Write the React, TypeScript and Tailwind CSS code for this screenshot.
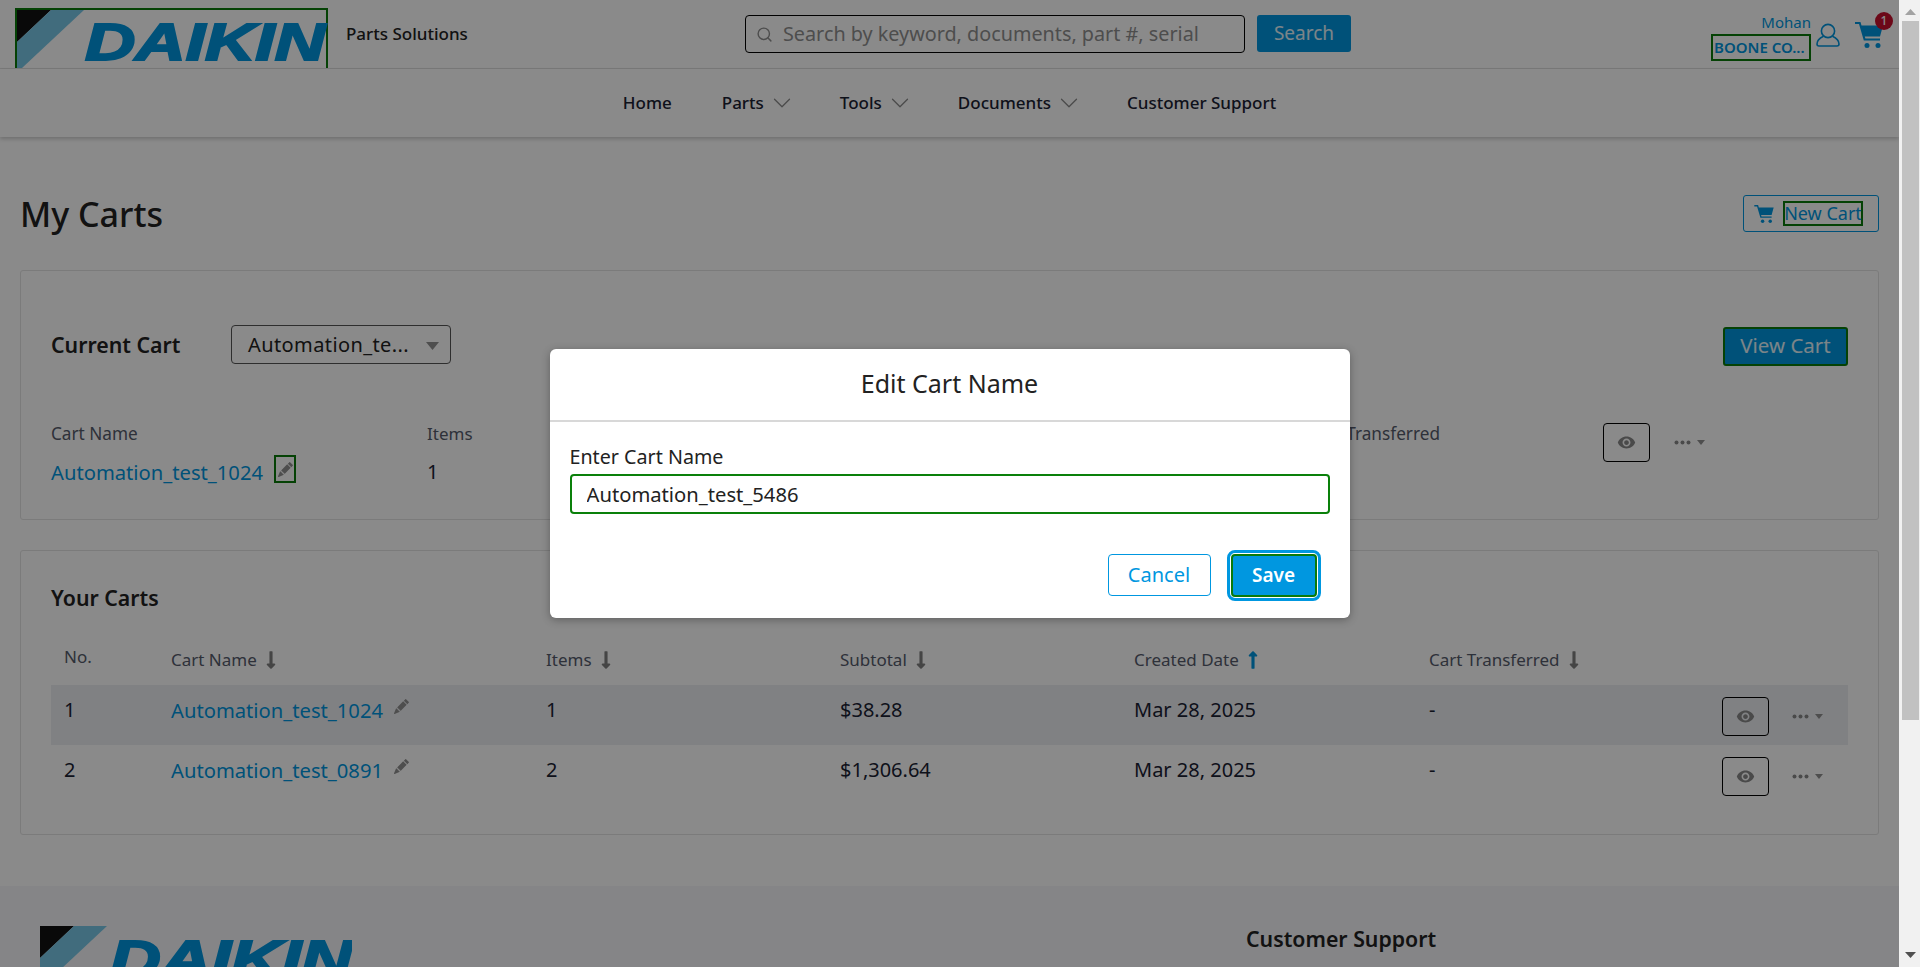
import { ChevronDown, Search } from "lucide-react";
import { BsPencilFill } from "react-icons/bs";
import { FaLongArrowAltDown, FaLongArrowAltUp } from "react-icons/fa";
import { MdRemoveRedEye } from "react-icons/md";

const carts = [
  { no: 1, name: "Automation_test_1024", items: 1, subtotal: "$38.28", date: "Mar 28, 2025" },
  { no: 2, name: "Automation_test_0891", items: 2, subtotal: "$1,306.64", date: "Mar 28, 2025" },
];

const Logo = ({ textX = 68, textY = 50, textWidth = 240 }: { textX?: number; textY?: number; textWidth?: number }) => (
  <svg width="312" height="70" viewBox="0 0 312 70" className="block">
    <polygon points="0,0 34,0 0,32" fill="#111" />
    <polygon points="34,0 67,0 5,58 0,62 0,32" fill="#78c8e8" />
    <text
      x={textX}
      y={textY}
      fontFamily="'Liberation Sans', sans-serif"
      fontWeight="700"
      fontStyle="italic"
      fontSize="52"
      textLength={textWidth}
      lengthAdjust="spacingAndGlyphs"
      fill="#0097e0"
      stroke="#0097e0"
      strokeWidth="2"
    >
      DAIKIN
    </text>
  </svg>
);

const UserIcon = () => (
  <svg width="24" height="24" viewBox="0 0 24 24" fill="none" stroke="#0097e0" strokeWidth="1.6">
    <circle cx="12" cy="8" r="6.6" />
    <path d="M7.5 13.2C3.5 15 1 18.5 1 21c0 1.4.8 2 2 2h18c1.2 0 2-.6 2-2 0-2.5-2.5-6-6.500-7.800" />
  </svg>
);

const CartIcon = ({ width, height }: { width: number; height: number }) => (
  <svg width={width} height={height} viewBox="0 0 28 26" fill="#0097e0">
    <path d="M0 0h5.500l1 3.500H28l-3 11H9.800l.6 2H25v2H8.800L4 2H0z" />
    <circle cx="12" cy="23.500" r="2.500" />
    <circle cx="23" cy="23.500" r="2.500" />
  </svg>
);

const MoreMenu = () => (
  <div className="flex items-center gap-[6px]">
    <svg width="17" height="5" viewBox="0 0 17 5" fill="#8a8a8a">
      <circle cx="2.500" cy="2.500" r="2" />
      <circle cx="8.500" cy="2.500" r="2" />
      <circle cx="14.500" cy="2.500" r="2" />
    </svg>
    <svg width="8" height="5" viewBox="0 0 8 5" fill="#909090">
      <polygon points="0,0 8,0 4,5" />
    </svg>
  </div>
);

const EyeButton = () => (
  <button className="flex h-[39px] w-[47px] items-center justify-center rounded-[4px] border border-black text-[#8a8a8a]">
    <MdRemoveRedEye size={19} />
  </button>
);

const NavItem = ({ label, menu }: { label: string; menu?: boolean }) => (
  <div className="flex items-center gap-[11px]">
    <span className="text-[17px] font-medium text-[#1b2233]">{label}</span>
    {menu && <ChevronDown size={30} strokeWidth={1} className="-mx-[7.500px] -my-[5px] text-[#8a8a8a]" />}
  </div>
);

const SortHead = ({ label, up }: { label: string; up?: boolean }) => (
  <div className="flex items-center gap-[4px] text-[17px] text-[#555b6b]">
    {label}
    {up ? (
      <FaLongArrowAltUp size={20} className="text-[#0097e0]" />
    ) : (
      <FaLongArrowAltDown size={20} className="text-[#808080]" />
    )}
  </div>
);

const Page = () => (
  <div className="w-full bg-white">
    <header className="flex h-[69px] items-start overflow-hidden border-b border-[#e2e2e2] bg-white">
      <div className="mt-[8px] ml-[15px] h-[80px] w-[313px] border-2 border-[#0a7a0a]">
        <Logo />
      </div>
      <span className="mt-[21px] ml-[18px] w-[120px] text-[17px] font-medium whitespace-nowrap text-[#222]">
        Parts Solutions
      </span>
      <div className="mt-[15px] ml-[279px] flex h-[38px] w-[500px] items-center rounded-[4px] border border-black pr-[42px] pl-[10px]">
        <Search size={17} strokeWidth={2} className="shrink-0 text-[#8f8f8f]" />
        <input
          className="ml-[10px] w-full text-[19.800px] outline-none placeholder:text-[#8f8f8f]"
          placeholder="Search by keyword, documents, part #, serial number"
        />
      </div>
      <button className="mt-[15px] ml-[12px] h-[37px] w-[94px] rounded-[3px] bg-[#0097e0] text-[19px] text-white/90">
        Search
      </button>
      <div className="mt-[12px] ml-[360px] flex w-[100px] flex-col items-end">
        <span className="text-[15px] leading-[20px] text-[#0097e0]">Mohan</span>
        <span className="mt-[2px] flex h-[27px] w-[100px] items-center overflow-hidden border-2 border-[#0a7a0a] pl-[1px] text-[15px] font-semibold whitespace-nowrap text-[#0097e0]">
          BOONE CO...
        </span>
      </div>
      <div className="mt-[23px] ml-[5px]">
        <UserIcon />
      </div>
      <div className="relative mt-[22px] ml-[15px]">
        <CartIcon width={28} height={26} />
        <span className="absolute -top-[10px] left-[20px] flex h-[18px] w-[18px] items-center justify-center rounded-full bg-[#c8102e] text-[12px] font-medium text-white">
          1
        </span>
      </div>
    </header>

    <nav className="relative flex h-[68px] items-center justify-center gap-[50px] bg-white shadow-[0_2px_4px_rgba(0,0,0,0.2)]">
      <NavItem label="Home" />
      <NavItem label="Parts" menu />
      <NavItem label="Tools" menu />
      <NavItem label="Documents" menu />
      <NavItem label="Customer Support" />
    </nav>

    <main className="px-[20px]">
      <div className="mt-[58px] flex h-[37px] items-center justify-between">
        <h1 className="pt-[2px] text-[34px] font-medium text-[#222]">My Carts</h1>
        <button className="flex h-[37px] w-[136px] items-center rounded-[3px] border border-[#0097e0] pl-[10px] text-[#0097e0]">
          <CartIcon width={20} height={18} />
          <span className="ml-[9px] flex h-[25px] w-[80px] items-center justify-center border-2 border-[#0a7a0a] text-[18px] whitespace-nowrap">
            New Cart
          </span>
        </button>
      </div>

      <section className="mt-[38px] h-[250px] rounded-[3px] border border-[#e4e4e4] px-[30px] pt-[54px]">
        <div className="flex h-[41px] items-start">
          <h2 className="mt-[4px] w-[180px] text-[21.300px] font-semibold text-[#222]">Current Cart</h2>
          <div className="flex h-[39px] w-[220px] items-center justify-between rounded-[4px] border border-[#555] pr-[11px] pl-[16px] text-[20px] tracking-[0.4px] text-[#222]">
            Automation_te...
            <svg width="13" height="8" viewBox="0 0 13 8" fill="#909090" className="mt-[3px]">
              <polygon points="0,0 13,0 6.500,8" />
            </svg>
          </div>
          <button className="mt-[2px] ml-auto h-[39px] w-[125px] rounded-[3px] border-2 border-[#0a7a0a] bg-[#0097e0] pb-[2px] text-[20.500px] text-white/90">
            View Cart
          </button>
        </div>
        <div className="mt-[57px] grid grid-cols-[376px_294px_294px_293px_295px_1fr]">
          <div>
            <div className="text-[17.200px] leading-[22px] text-[#555b6b]">Cart Name</div>
            <div className="mt-[10px] flex h-[28px] items-end">
              <a className="text-[20.200px] leading-[22px] text-[#0097e0]">{carts[0].name}</a>
              <span className="ml-[11px] flex h-[28px] w-[22px] items-center justify-center border-2 border-[#0a7a0a] text-[#909090]">
                <BsPencilFill size={15} />
              </span>
            </div>
          </div>
          <div>
            <div className="text-[17px] leading-[22px] text-[#555b6b]">Items</div>
            <div className="mt-[10px] flex h-[28px] items-end text-[20px] leading-[22px] text-[#1b2233]">1</div>
          </div>
          <div className="text-[17.200px] leading-[22px] text-[#555b6b]">Subtotal</div>
          <div className="text-[17.200px] leading-[22px] text-[#555b6b]">Created Date</div>
          <div className="text-[17.200px] leading-[22px] whitespace-nowrap text-[#555b6b]">Cart Transferred</div>
          <div className="flex items-center gap-[24px] self-start">
            <EyeButton />
            <MoreMenu />
          </div>
        </div>
      </section>

      <section className="mt-[30px] h-[285px] rounded-[3px] border border-[#e4e4e4] px-[30px] pt-[33px]">
        <h2 className="text-[21.300px] leading-[28px] font-semibold text-[#222]">Your Carts</h2>
        <div className="mt-[33px] grid h-[40px] grid-cols-[120px_375px_294px_294px_295px_293px_1fr] text-[#555b6b]">
          <div className="pl-[13px] text-[17px] leading-[24px]">No.</div>
          <div className="mt-[2px]"><SortHead label="Cart Name" /></div>
          <div className="mt-[2px]"><SortHead label="Items" /></div>
          <div className="mt-[2px]"><SortHead label="Subtotal" /></div>
          <div className="mt-[2px]"><SortHead label="Created Date" up /></div>
          <div className="mt-[2px]"><SortHead label="Cart Transferred" /></div>
        </div>
        {carts.map((cart) => (
          <div
            key={cart.no}
            className={`grid h-[60px] grid-cols-[120px_375px_294px_294px_295px_293px_1fr] pt-[12px] text-[20px] leading-[26px] text-[#1b2233] ${
              cart.no === 1 ? "bg-[#edeff3]" : ""
            }`}
          >
            <div className="pl-[13px]">{cart.no}</div>
            <div className="flex items-start">
              <a className="text-[20.200px] text-[#0097e0]">{cart.name}</a>
              <BsPencilFill size={15} className="mt-[2px] ml-[11px] text-[#909090]" />
            </div>
            <div>{cart.items}</div>
            <div>{cart.subtotal}</div>
            <div>{cart.date}</div>
            <div>-</div>
            <div className="flex items-start gap-[23px]">
              <EyeButton />
              <div className="mt-[17px]">
                <MoreMenu />
              </div>
            </div>
          </div>
        ))}
      </section>
    </main>

    <footer className="mt-[51px] flex h-[200px] bg-[#f5f6f9] pt-[40px] pl-[40px]">
      <Logo textX={70} textY={51} textWidth={242} />
      <h3 className="-mt-[2px] ml-[894px] text-[21.300px] leading-[30px] font-semibold text-[#222]">Customer Support</h3>
    </footer>
  </div>
);

const EditCartModal = () => (
  <div className="absolute inset-0 flex justify-center bg-black/[.46] pt-[349px]">
    <div className="h-[269px] w-[800px] rounded-[6px] bg-white shadow-[0_2px_8px_rgba(0,0,0,0.3)]">
      <div className="flex h-[73px] items-center justify-center border-b-2 border-[#d8d8d8] pb-[2px] text-[25px] text-[#222]">
        Edit Cart Name
      </div>
      <div className="px-[20px] pt-[22px]">
        <label className="block text-[19.700px] leading-[26px] text-[#222]">Enter Cart Name</label>
        <input
          defaultValue="Automation_test_5486"
          className="mt-[4px] h-[40px] w-full rounded-[4px] border-2 border-[#0a800a] px-[15px] text-[20.200px] text-[#222] outline-none"
        />
        <div className="mt-[40px] flex justify-end gap-[20px] pr-[13px]">
          <button className="h-[42px] w-[103px] rounded-[4px] border border-[#0097e0] text-[20px] text-[#0097e0]">
            Cancel
          </button>
          <button className="h-[43px] w-[86px] rounded-[4px] border-2 border-[#0a7a0a] bg-[#0097e0] text-[19px] font-semibold text-white outline-[3px] outline-offset-[1px] outline-[#0097e0]">
            Save
          </button>
        </div>
      </div>
    </div>
  </div>
);

const Scrollbar = () => (
  <div className="flex w-[21px] shrink-0 flex-col items-center bg-[#f1f1f1] pl-[1px]">
    <svg width="11" height="6" viewBox="0 0 11 6" fill="#a3a3a3" className="mt-[9px]">
      <polygon points="5.500,0 11,6 0,6" />
    </svg>
    <div className="mt-[6px] h-[699px] w-[17px] bg-[#c1c1c1]" />
    <svg width="11" height="6" viewBox="0 0 11 6" fill="#505050" className="mt-[232px]">
      <polygon points="0,0 11,0 5.500,6" />
    </svg>
  </div>
);

export default function App() {
  return (
    <div
      className="flex h-[967px] w-[1920px] overflow-hidden"
      style={{ fontFamily: "'Noto Sans', 'Open Sans', sans-serif" }}
    >
      <div className="relative w-[1899px] overflow-hidden">
        <Page />
        <EditCartModal />
      </div>
      <Scrollbar />
    </div>
  );
}
